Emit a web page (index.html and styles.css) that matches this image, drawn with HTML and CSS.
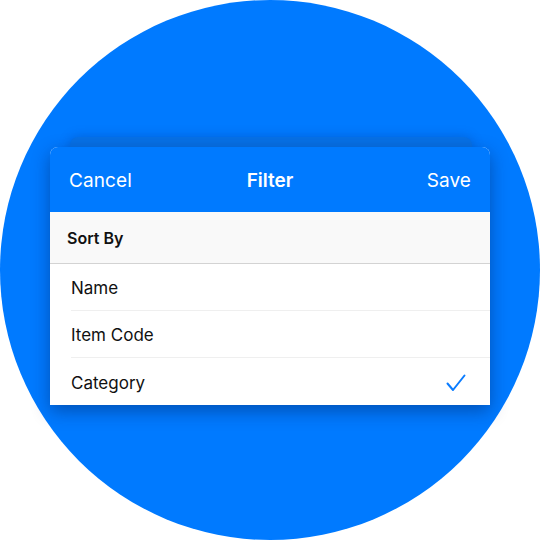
FILE: index.html
```html
<!DOCTYPE html>
<html>
<head>
<meta charset="utf-8">
<link rel="stylesheet" href="styles.css">
</head>
<body>
<div class="circle">
  <div class="stack">
    <div class="ghost"></div>
    <div class="card">
      <div class="header">
        <span class="btn left">Cancel</span>
        <span class="title">Filter</span>
        <span class="btn right">Save</span>
      </div>
      <div class="section">Sort By</div>
      <div class="list">
        <div class="row"><span>Name</span></div>
        <div class="row"><span>Item Code</span></div>
        <div class="row last"><span>Category</span>
          <svg class="check" width="20" height="18" viewBox="0 0 20 18"><path d="M1.5 9.5 L7 16 L18.5 1.5" fill="none" stroke="#0a7cff" stroke-width="2" stroke-linecap="round" stroke-linejoin="round"/></svg>
        </div>
      </div>
    </div>
  </div>
</div>
</body>
</html>
```
FILE: styles.css
```css
html, body { margin: 0; padding: 0; background: #ffffff; }
body { font-family: Inter, "Noto Sans", "Liberation Sans", sans-serif; }
.circle {
  width: 540px; height: 540px; border-radius: 50%;
  background: #007aff;
  box-sizing: border-box;
  padding: 147px 0 0 50px;
}
.stack { position: relative; width: 440px; }
.ghost {
  position: absolute; left: 20px; right: 18px; top: -10px; height: 30px;
  background: #0771e6; border-radius: 8px;
  box-shadow: 0 0 12px rgba(0,40,120,0.25);
}
.card {
  position: relative;
  width: 440px; background: #fff;
  border-radius: 8px 8px 0 0;
  overflow: hidden;
  box-shadow: 0 6px 18px rgba(0,30,90,0.45);
}
.header {
  height: 65px; background: #007aff;
  display: grid; grid-template-columns: 1fr auto 1fr; align-items: center;
  padding: 2px 19px 0 19px; box-sizing: border-box;
  color: #fff; font-size: 19px;
}
.btn { font-weight: 400; letter-spacing: 0.1px; }
.left { justify-self: start; }
.right { justify-self: end; }
.title { font-weight: 600; }
.section {
  height: 52px; box-sizing: border-box;
  background: #f9f9f9; border-bottom: 1px solid #d3d3d3;
  display: flex; align-items: center; padding-left: 17px;
  font-size: 16px; font-weight: 600; color: #111;
}
.list { padding-left: 21px; }
.row {
  height: 47px; box-sizing: border-box;
  border-bottom: 1px solid #efefef;
  display: flex; align-items: center; justify-content: space-between;
  padding: 2px 24px 0 0;
  font-size: 17px; color: #111;
}
.row.last { border-bottom: none; }
.check { display: block; }
```
